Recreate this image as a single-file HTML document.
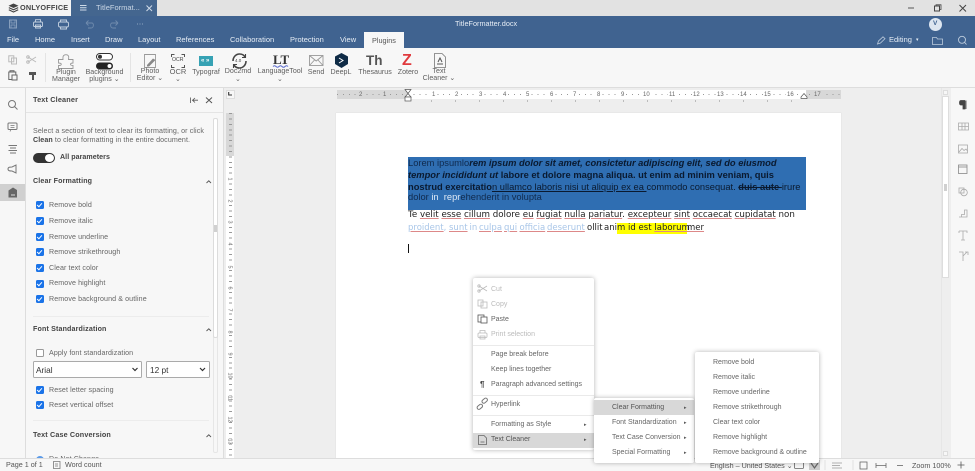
<!DOCTYPE html>
<html><head><meta charset="utf-8">
<style>
html,body{margin:0;padding:0}
body{width:975px;height:471px;overflow:hidden;position:relative;background:#eee;font-family:"Liberation Sans",sans-serif;font-size:7.5px;color:#444}
#w{position:absolute;left:0;top:0;width:975px;height:471px;overflow:hidden;filter:blur(.3px)}
.a,.t,svg{position:absolute}
.t{white-space:nowrap;line-height:10px}
.c{text-align:center;transform:translateX(-50%);line-height:7px;color:#606060;font-size:7.1px}
.w{color:#e6edf5;font-size:7.5px}
.p{color:#666;font-size:7.1px;letter-spacing:.1px}
.h{color:#444;font-weight:bold;font-size:7.2px;letter-spacing:.15px}
.cb{position:absolute;left:35.5px;width:8px;height:8px;background:#1a73e8;border-radius:1.5px}
.cb:after{content:"";position:absolute;left:2.6px;top:.6px;width:2px;height:4px;border:solid #fff;border-width:0 1.2px 1.2px 0;transform:rotate(42deg)}
.m{color:#666;font-size:7px}
.d{font-size:7px}
.menu{position:absolute;background:#fff;border-radius:2px;box-shadow:0 0 5px rgba(0,0,0,.3)}
.doc{font-family:"Liberation Sans",sans-serif;font-size:9.33px;color:#222}
.o{font-family:"DejaVu Sans",sans-serif;font-size:8.7px;color:#222}
.o2{font-family:"DejaVu Sans",sans-serif;font-size:8.5px;color:#222;top:223px}
.l{color:#a9c6e8}
.u{text-decoration:underline;text-decoration-color:#d88;text-underline-offset:1px}
.n{font-size:6px;color:#666;line-height:8px;padding:0 1px;top:90.5px;background:#fff}
.g{background:#d8d8d8}
.v{font-size:5.5px;color:#666;line-height:6px;left:227px;width:5px;text-align:center;background:#fff;transform:rotate(90deg)}
svg{overflow:visible}
</style></head><body><div id="w">

<!-- title bar -->
<div class="a" style="left:0;top:0;width:975px;height:16px;background:#e2e2e2"></div>
<div class="a" style="left:0;top:0;width:71px;height:16px;background:#f4f4f4"></div>
<div class="a" style="left:71px;top:0;width:86px;height:16px;background:#44668f"></div>
<svg style="left:8px;top:3px" width="11" height="10" viewBox="0 0 11 10"><path d="M5.5 0.5L10.5 2.8 5.5 5 .5 2.8Z" fill="#444"/><path d="M.8 4.6L5.5 6.8 10.2 4.6M.8 6.8L5.5 9 10.2 6.8" fill="none" stroke="#444" stroke-width="1.1"/></svg>
<div class="t" style="left:20px;top:3px;font-size:7.3px;font-weight:bold;color:#444;letter-spacing:.2px">ONLYOFFICE</div>
<svg style="left:80px;top:5px" width="7" height="6"><path d="M0 .5H6.5M0 2.8H6.5M0 5H6.5" stroke="#cfdbe8" stroke-width="1"/></svg>
<div class="t w" style="left:96px;top:3px;color:#c9d6e5">TitleFormat...</div>
<svg style="left:146px;top:5px" width="7" height="7"><path d="M.5 .5L6 6M6 .5L.5 6" stroke="#cfdbe8" stroke-width="1"/></svg>
<svg style="left:908px;top:4px" width="60" height="9"><path d="M0 4H6" stroke="#555" stroke-width="1"/><rect x="26.5" y="2" width="5" height="5" fill="none" stroke="#444" stroke-width="1"/><path d="M28 2V.8H33V5.5H31.8" fill="none" stroke="#444" stroke-width=".8"/><path d="M51.500 1L58 7.500M58 1L51.500 7.500" stroke="#444" stroke-width="1"/></svg>

<!-- header -->
<div class="a" style="left:0;top:16px;width:975px;height:32px;background:#406390"></div>
<svg style="left:9px;top:19px" width="140" height="11" fill="none" stroke="#8ea5c1" stroke-width=".9"><rect x=".5" y="1" width="7" height="8"/><path d="M2 1V4H6V1M2 9V6H6V9" stroke-width=".7"/><g stroke="#c5d2e1"><rect x="24.500" y="3" width="9" height="4.500" rx="1"/><path d="M26.500 3V.7H31.500V3M26.500 6H31.500V9H26.500Z"/><rect x="49.500" y="3" width="10" height="5" rx="1.500"/><path d="M51.500 3V1H57.500V3M51.500 8V10H57.500V8"/></g><g stroke="#6f8bad"><path d="M77 4H83C85 4 85 9 82 9H79M77 4L79.500 1.500M77 4L79.500 6.500"/><path d="M109 4H103C101 4 101 9 104 9H107M109 4L106.500 1.500M109 4L106.500 6.500"/></g><path d="M128 5H129M130.500 5H131.500M133 5H134" stroke="#8ea5c1"/></svg>
<div class="t w" style="left:455px;top:19px;font-size:7.3px">TitleFormatter.docx</div>
<div class="a" style="left:929px;top:18px;width:13px;height:13px;border-radius:50%;background:#dde6f0"></div>
<div class="t" style="left:933px;top:19px;font-weight:bold;color:#406390;font-size:6.5px">V</div>
<div class="t w" style="left:7px;top:35px">File</div>
<div class="t w" style="left:35px;top:35px">Home</div>
<div class="t w" style="left:71px;top:35px">Insert</div>
<div class="t w" style="left:105px;top:35px">Draw</div>
<div class="t w" style="left:138px;top:35px">Layout</div>
<div class="t w" style="left:176px;top:35px">References</div>
<div class="t w" style="left:230px;top:35px">Collaboration</div>
<div class="t w" style="left:290px;top:35px">Protection</div>
<div class="t w" style="left:340px;top:35px">View</div>
<div class="a" style="left:364px;top:32px;width:40px;height:16px;background:#f7f7f7"></div>
<div class="t" style="left:372px;top:36px;color:#555;font-size:7.3px">Plugins</div>
<svg style="left:877px;top:36px" width="90" height="10" fill="none" stroke="#bccbdc"><path d="M.5 8L1.500 5 6 .8 8 2.600 3.500 7Z" stroke-width=".8"/><path d="M55.500 1.500H59.500L60.500 3H65.500V8.500H55.500Z" stroke-width=".8"/><circle cx="85" cy="3.800" r="3.500" stroke-width=".9"/><path d="M87.500 6.300L89.500 8.500" stroke-width=".9"/></svg>
<div class="t w" style="left:889px;top:35px">Editing</div>
<div class="t w" style="left:916px;top:35px;font-size:5px">▾</div>

<!-- toolbar -->
<div class="a" style="left:0;top:48px;width:975px;height:39px;background:#f7f7f7;border-bottom:1px solid #ddd"></div>
<div class="a" style="left:45px;top:53px;width:1px;height:29px;background:#e4e4e4"></div>
<div class="a" style="left:130px;top:53px;width:1px;height:29px;background:#e4e4e4"></div>
<svg style="left:8px;top:55px" width="30" height="28" fill="none" stroke="#bbb" stroke-width="1"><rect x=".8" y=".8" width="5" height="6"/><rect x="3.500" y="3" width="5" height="6"/><path d="M20 2L28 7M20 7L28 2"/><circle cx="20" cy="2" r="1.300"/><circle cx="20" cy="7" r="1.300"/><g stroke="#666"><rect x=".8" y="17" width="7" height="7.500"/><rect x="4" y="20" width="5" height="5" fill="#f7f7f7"/><path d="M2 17V15.700H6V17"/></g><path d="M21 17H28V20H26V25H24V20H21Z" fill="#555" stroke="none"/></svg>
<svg style="left:58px;top:54px" width="16" height="15" fill="none" stroke="#999" stroke-width=".9"><path d="M.5 5.500H5C5 4 4.500 3 5.500 1.700 6.700 .3 9.300 .3 10.300 1.700 11.300 3 10.500 4 10.500 5.500H15V9C13.500 9 12.500 9.300 12.500 10.300S13.500 11.500 15 11.500V14.500H.5V11.500C2 11.500 3.300 11.300 3.300 10.300S2 9 .5 9Z"/></svg>
<div class="t c" style="left:66px;top:69px">Plugin<br>Manager</div>
<svg style="left:96px;top:53px" width="18" height="17"><rect x=".5" y=".5" width="16" height="6.500" rx="3.250" fill="#fff" stroke="#333"/><circle cx="4" cy="3.700" r="2" fill="#333"/><rect x="0" y="9.500" width="17" height="7" rx="3.500" fill="#222"/><circle cx="13.500" cy="13" r="2" fill="#fff"/></svg>
<div class="t c" style="left:104.500px;top:69px">Background<br>plugins ⌄</div>
<svg style="left:144px;top:54px" width="14" height="14" fill="none" stroke="#999"><path d="M.5 .5H11.500V13.500H.5Z" stroke-width=".9"/><path d="M3 11L9 4.500 11.500 6 5 12.500H3Z" fill="#888" stroke="none"/></svg>
<div class="t c" style="left:150px;top:68px">Photo<br>Editor ⌄</div>
<svg style="left:171px;top:54px" width="14" height="14" fill="none" stroke="#555"><path d="M.5 3V.5H3.500M10.500 .5H13.500V3M.5 11V13.500H3.500M10.500 13.500H13.500V11"/></svg>
<div class="t" style="left:172px;top:57px;font-size:5.200px;color:#444;line-height:7px">OCR</div>
<div class="t c" style="left:178px;top:68px;font-size:7.500px">OCR</div>
<div class="t" style="left:175px;top:75px;font-size:7px;color:#666">⌄</div>
<div class="a" style="left:199px;top:56px;width:14px;height:10px;background:#36a2b4"></div>
<div class="t" style="left:201px;top:56px;font-size:6px;color:#fff;font-weight:bold">«  »</div>
<div class="t c" style="left:206px;top:69px">Typograf</div>
<svg style="left:231px;top:53px" width="17" height="16" fill="none" stroke="#444" stroke-width="1.600"><path d="M2 8C2 4 5 1 8.500 1 11 1 13 2 14 4M15 8C15 12 12 15 8.500 15 6 15 4 14 3 12"/><path d="M14.500 1V4.500H11M2.500 15V11.500H6" stroke-width="1.100"/></svg>
<div class="t" style="left:235px;top:56px;font-size:4.500px;color:#444">4.0</div>
<div class="t c" style="left:238px;top:68px">Doc2md</div>
<div class="t" style="left:235px;top:75px;font-size:7px;color:#666">⌄</div>
<div class="t" style="left:273px;top:53px;font-family:'Liberation Serif',serif;font-size:13px;font-weight:bold;color:#333;line-height:13px">LT</div>
<svg style="left:273px;top:65px" width="15" height="3"><path d="M0 1.500Q1.500 0 3 1.500T6 1.500 9 1.500 12 1.500 15 1.500" fill="none" stroke="#5566cc"/></svg>
<div class="t c" style="left:280px;top:68px">LanguageTool</div>
<div class="t" style="left:277px;top:75px;font-size:7px;color:#666">⌄</div>
<svg style="left:309px;top:55px" width="15" height="11" fill="none" stroke="#999" stroke-width=".9"><rect x=".5" y=".5" width="13.500" height="10"/><path d="M.5 .5L7.200 6 14 .5M.5 10.500L5.500 5M14 10.500L9 5"/></svg>
<div class="t c" style="left:316px;top:69px">Send</div>
<svg style="left:335px;top:53px" width="13" height="15"><path d="M6.500 0L13 3.500V11L6.500 15 0 11V3.500Z" fill="#0f2b46"/><path d="M4 5L8 7.500 4 10" fill="none" stroke="#fff" stroke-width="1"/></svg>
<div class="t c" style="left:341px;top:69px">DeepL</div>
<div class="t" style="left:366px;top:53px;font-size:13.500px;font-weight:bold;color:#555;line-height:15px">Th</div>
<div class="t c" style="left:375px;top:69px">Thesaurus</div>
<div class="t" style="left:402px;top:52px;font-size:16px;font-weight:bold;color:#e03a3e;line-height:17px">Z</div>
<div class="t c" style="left:408px;top:69px">Zotero</div>
<svg style="left:434px;top:53px" width="12" height="15" fill="none" stroke="#777" stroke-width=".8"><path d="M.5 .5H8L11.500 4V14.500H.5Z"/><path d="M3 11H9M4 9L6 5 8 9" stroke="#555" stroke-width="1"/></svg>
<div class="t c" style="left:439px;top:67.500px">Text<br>Cleaner ⌄</div>

<!-- left bar -->
<div class="a" style="left:0;top:88px;width:25px;height:370px;background:#f7f7f7;border-right:1px solid #ddd"></div>
<svg style="left:7px;top:99px" width="13" height="100" fill="none" stroke="#777" stroke-width="1"><circle cx="5" cy="5" r="3.500"/><path d="M7.500 7.500L10.500 10.500"/><rect x="1" y="24" width="9" height="6.500" rx="1"/><path d="M3 32.500L4 30.500H6M3.500 26.500H7.500M3.500 28.500H7.500" stroke-width=".7"/><path d="M1.500 46.500H10M3 49H9M1.500 51.500H10M3 54H9"/><path d="M1 70C1 68 3 68 5 68L9 66V74L5 72C3 72 1 72 1 70Z"/></svg>
<div class="a" style="left:0;top:184px;width:25px;height:17px;background:#d0d0d0"></div>
<svg style="left:8px;top:187px" width="10" height="11"><path d="M5 0.500L9 3V10.500H.5V3.500Z" fill="#666"/><path d="M3 8H7" stroke="#ddd"/></svg>

<!-- panel -->
<div class="a" style="left:26px;top:88px;width:197px;height:370px;background:#f7f7f7;border-right:1px solid #ddd"></div>
<div class="a" style="left:26px;top:112px;width:197px;height:1px;background:#e4e4e4"></div>
<div class="t h" style="left:33px;top:95px;font-size:7.300px">Text Cleaner</div>
<svg style="left:190px;top:97px" width="27" height="7" fill="none" stroke="#555" stroke-width=".8"><path d="M.5 .5V6M8 3.200H2.500M5 1L2.500 3.200 5 5.500"/><path d="M16 .5L22 6M22 .5L16 6" stroke-width="1"/></svg>
<div class="a" style="left:213px;top:118px;width:5px;height:335px;border:1px solid #e6e6e6;border-radius:2px;box-sizing:border-box"></div>
<div class="a" style="left:213px;top:118px;width:5px;height:220px;background:#fff;border:1px solid #dcdcdc;border-radius:2px;box-sizing:border-box"></div>
<div class="a" style="left:214px;top:225px;width:3px;height:7px;background:#d0d0d0"></div>
<div class="t p" style="left:33px;top:126px">Select a section of text to clear its formatting, or click</div>
<div class="t p" style="left:33px;top:135px"><b style="color:#444">Clean</b> to clear formatting in the entire document.</div>
<div class="a" style="left:33px;top:153px;width:22px;height:10px;border-radius:5px;background:#333"></div>
<div class="a" style="left:45px;top:154px;width:9px;height:8px;border-radius:50%;background:#fff"></div>
<div class="t h" style="left:60px;top:152px;font-size:7.100px;letter-spacing:.05px">All parameters</div>
<div class="t h" style="left:33px;top:176px;font-size:7.100px">Clear Formatting</div>
<svg style="left:205.500px;top:179.500px" width="6" height="4"><path d="M.5 3L2.800 .8 5 3" fill="none" stroke="#555" stroke-width=".9"/></svg>
<div class="cb" style="top:201px"></div><div class="t p" style="left:49px;top:200px">Remove bold</div>
<div class="cb" style="top:217px"></div><div class="t p" style="left:49px;top:216px">Remove italic</div>
<div class="cb" style="top:233px"></div><div class="t p" style="left:49px;top:232px">Remove underline</div>
<div class="cb" style="top:248px"></div><div class="t p" style="left:49px;top:247px">Remove strikethrough</div>
<div class="cb" style="top:264px"></div><div class="t p" style="left:49px;top:263px">Clear text color</div>
<div class="cb" style="top:280px"></div><div class="t p" style="left:49px;top:278px">Remove highlight</div>
<div class="cb" style="top:295px"></div><div class="t p" style="left:49px;top:294px">Remove background &amp; outline</div>
<div class="a" style="left:33px;top:316px;width:176px;height:1px;background:#ececec"></div>
<div class="t h" style="left:33px;top:324px;font-size:7.100px">Font Standardization</div>
<svg style="left:205.500px;top:327.500px" width="6" height="4"><path d="M.5 3L2.800 .8 5 3" fill="none" stroke="#555" stroke-width=".9"/></svg>
<div class="a" style="left:35.500px;top:349px;width:8px;height:8px;border:1px solid #999;border-radius:1.500px;background:#fff;box-sizing:border-box"></div>
<div class="t p" style="left:49px;top:348px">Apply font standardization</div>
<div class="a" style="left:33px;top:361px;width:109px;height:17px;background:#fff;border:1px solid #aaa;border-radius:1.500px;box-sizing:border-box"></div>
<div class="t" style="left:36px;top:365px;font-size:8.300px;color:#333">Arial</div>
<div class="a" style="left:146px;top:361px;width:64px;height:17px;background:#fff;border:1px solid #aaa;border-radius:1.500px;box-sizing:border-box"></div>
<div class="t" style="left:150px;top:365px;font-size:8.300px;color:#333">12 pt</div>
<svg style="left:132px;top:367px" width="75" height="6" fill="none" stroke="#333" stroke-width="1.200"><path d="M.5 1L3 3.500 5.500 1M68 1L70.500 3.500 73 1"/></svg>
<div class="cb" style="top:386px"></div><div class="t p" style="left:49px;top:385px">Reset letter spacing</div>
<div class="cb" style="top:401px"></div><div class="t p" style="left:49px;top:400px">Reset vertical offset</div>
<div class="a" style="left:33px;top:420px;width:176px;height:1px;background:#ececec"></div>
<div class="t h" style="left:33px;top:430px">Text Case Conversion</div>
<svg style="left:205.500px;top:433.500px" width="6" height="4"><path d="M.5 3L2.800 .8 5 3" fill="none" stroke="#555" stroke-width=".9"/></svg>
<div class="a" style="left:36px;top:456px;width:8px;height:8px;border-radius:50%;background:#5b9ae8"></div>
<div class="t p" style="left:49px;top:454px">Do Not Change</div>

<!-- rulers -->
<div class="a" style="left:224px;top:88px;width:717px;height:370px;background:#eee"></div>
<div class="a" style="left:226px;top:90px;width:9px;height:9px;background:#f7f7f7;border:1px solid #ddd;box-sizing:border-box"></div>
<svg style="left:228px;top:92px" width="4" height="4"><path d="M.7 0V3H4" fill="none" stroke="#333" stroke-width="1.100"/></svg>
<div class="a" style="left:226px;top:113px;width:8px;height:345px;background:#fff"></div>
<div class="a" style="left:226px;top:113px;width:8px;height:43px;background:#d8d8d8"></div>
<div class="a" style="left:337px;top:90px;width:71px;height:9px;background:#d8d8d8"></div>
<div class="a" style="left:408px;top:90px;width:398px;height:9px;background:#fff"></div>
<div class="a" style="left:806px;top:90px;width:35px;height:9px;background:#d8d8d8"></div>
<div class="a" style="left:337px;top:94px;width:504px;height:1px;background:repeating-linear-gradient(90deg,#999 0 1px,transparent 1px 5.900px)"></div>
<div class="a" style="left:408px;top:100px;width:398px;height:2px;background:repeating-linear-gradient(90deg,transparent 0 23px,#bbb 23px 24px,transparent 24px 23.600px)"></div>
<div class="a" style="left:228.500px;top:113px;width:3px;height:345px;background:repeating-linear-gradient(180deg,#999 0 1px,transparent 1px 5.420px)"></div>
<span class="a n g" style="left:358px">2</span><span class="a n g" style="left:382px">1</span><span class="a n" style="left:431px">1</span><span class="a n" style="left:454px">2</span><span class="a n" style="left:478px">3</span><span class="a n" style="left:502px">4</span><span class="a n" style="left:525px">5</span><span class="a n" style="left:549px">6</span><span class="a n" style="left:572px">7</span><span class="a n" style="left:596px">8</span><span class="a n" style="left:620px">9</span><span class="a n" style="left:642px">10</span><span class="a n" style="left:668px">11</span><span class="a n" style="left:692px">12</span><span class="a n" style="left:716px">13</span><span class="a n" style="left:739px">14</span><span class="a n" style="left:763px">15</span><span class="a n" style="left:786px">16</span><span class="a n g" style="left:813px">17</span>
<span class="a v" style="top:176px">1</span><span class="a v" style="top:198px">2</span><span class="a v" style="top:219px">3</span><span class="a v" style="top:241px">4</span><span class="a v" style="top:264px">5</span><span class="a v" style="top:285px">6</span><span class="a v" style="top:307px">7</span><span class="a v" style="top:329px">8</span><span class="a v" style="top:351px">9</span><span class="a v" style="top:372px">10</span><span class="a v" style="top:395px">11</span><span class="a v" style="top:416px">12</span><span class="a v" style="top:438px">13</span>
<svg style="left:404px;top:89px" width="10" height="13" fill="#fff" stroke="#555" stroke-width=".7"><path d="M1 .5H7L4 4.500Z"/><path d="M4 4.500L7 8H1Z"/><rect x="1" y="8" width="6" height="4"/></svg>
<svg style="left:800px;top:93px" width="8" height="6" fill="#fff" stroke="#555" stroke-width=".7"><path d="M4 .5L7 4V5.500H1V4Z"/></svg>

<!-- page -->
<div class="a" style="left:336px;top:113px;width:505px;height:345px;background:#fff;box-shadow:0 0 1px #ccc"></div>
<div class="a" style="left:408px;top:157px;width:398px;height:53px;background:#2f6eb2"></div>
<div class="t doc" style="left:408px;top:158px;color:#102a4d">Lorem ipsumlo<b style="color:#0a1a30"><i>rem ipsum dolor sit amet, consictetur adipiscing elit, sed do eiusmod</i></b></div>
<div class="t doc" style="left:408px;top:170px;color:#0a1a30;font-weight:bold"><i>tempor incididunt ut</i> labore et dolore magna aliqua. ut enim ad minim veniam, quis</div>
<div class="t doc" style="left:408px;top:182px;color:#0a1a30"><b>nostrud exercitatio</b><u>n ullamco laboris nisi ut aliquip ex ea </u>commodo consequat. <b><s>duis aute </s></b>irure</div>
<div class="t doc" style="left:408px;top:191.500px;color:#102a4d">dolor <span style="color:#dde8f5">in&nbsp; repr</span>ehenderit in volupta</div>
<div class="t o" style="left:408px;top:210px"><span>Te </span><span class="u">velit</span> <span class="u">esse</span> <span class="u">cillum</span> dolore <span class="u">eu</span> <span class="u">fugiat</span> <span class="u">nulla</span> <span class="u">pariatur</span>. <span class="u">excepteur</span> <span class="u">sint</span> <span class="u">occaecat</span> <span class="u">cupidatat</span> non</div>
<div class="t o2 l" style="left:408px"><span class="u">proident</span>,</div>
<div class="t o2 l" style="left:449px"><span class="u">sunt</span></div>
<div class="t o2 l" style="left:469.500px">in</div>
<div class="t o2 l" style="left:479px"><span class="u">culpa</span></div>
<div class="t o2 l" style="left:504px"><span class="u">qui</span></div>
<div class="t o2 l" style="left:519.500px"><span class="u">officia</span></div>
<div class="t o2 l" style="left:547px"><span class="u">deserunt</span></div>
<div class="t o2" style="left:587px">ollit</div>
<div class="t o2" style="left:604px">ani</div>
<div class="a" style="left:617px;top:223px;width:70px;height:11px;background:#ff0"></div>
<div class="t o2" style="left:617px;letter-spacing:.02px">m id est <span class="u">laborum</span></div>
<div class="t o2" style="left:687px"><span class="u">mer</span></div>
<div class="a" style="left:408px;top:244px;width:1px;height:9px;background:#111"></div>

<!-- scrollbar and right panel -->
<div class="a" style="left:941px;top:88px;width:10px;height:370px;background:#eee;border-left:1px solid #e6e6e6;box-sizing:border-box"></div>
<div class="a" style="left:942px;top:96px;width:7px;height:182px;background:#fff;border:1px solid #ddd;box-sizing:border-box"></div>
<div class="a" style="left:943px;top:90px;width:5px;height:5px;background:#f7f7f7;border:1px solid #ddd;box-sizing:border-box"></div>
<div class="a" style="left:943px;top:451px;width:5px;height:5px;background:#f7f7f7;border:1px solid #ddd;box-sizing:border-box"></div>
<div class="a" style="left:944px;top:184px;width:3px;height:7px;background:#d0d0d0"></div>
<div class="a" style="left:951px;top:88px;width:24px;height:370px;background:#f7f7f7"></div>
<svg style="left:958px;top:100px" width="12" height="165" fill="none" stroke="#aaa" stroke-width=".8"><path d="M7 .5H3C1 .5 1 5 3 5H5V9H7V.5M8 .5V9" fill="#444" stroke="#444"/><path d="M.5 23H10.500V30H.5ZM.5 26.500H10.500M4 23V30M7 23V30"/><rect x=".5" y="45" width="9" height="8"/><path d="M1 52L4 48.500 6 50.500 8 49 9.500 51"/><rect x=".5" y="65" width="8.500" height="8.500" stroke="#888"/><path d="M.5 67H9" stroke="#888"/><rect x="1" y="88" width="5" height="5"/><circle cx="6" cy="92.500" r="3.300"/><path d="M1 117H3.500V114.500H6.500V110H9V117H1Z"/><path d="M1 131H9V133M1 131V133M5 131V140M3 140H7"/><path d="M1 152H5V161M5 156L9 152M7 152H10V155"/></svg>

<!-- status bar -->
<div class="a" style="left:0;top:458px;width:975px;height:13px;background:#f7f7f7;border-top:1px solid #ddd;box-sizing:border-box"></div>
<div class="t" style="left:6px;top:460px;font-size:7.200px;color:#555">Page 1 of 1</div>
<svg style="left:53px;top:461px" width="8" height="8" fill="none" stroke="#777"><path d="M.5 .5H7V7.500H.5ZM2 3H5M2 5H5" stroke-width=".8"/></svg>
<div class="t" style="left:65px;top:460px;font-size:7.200px;color:#555">Word count</div>
<div class="t" style="left:710px;top:460.500px;font-size:7.200px;color:#555">English – United States ⌄</div>
<svg style="left:794px;top:462px" width="135" height="8" fill="none" stroke="#666" stroke-width=".8"><rect x=".5" y=".5" width="9" height="6" rx="1"/><rect x="15" y="-2" width="11" height="10" fill="#ccc" stroke="none"/><path d="M17 1L20.500 6 24 1" stroke-width="1.200"/><path d="M31 -2V8M59 -2V8" stroke="#ddd"/><path d="M38 1H48M38 3.500H46M38 6H48" stroke="#999"/><rect x="66" y="0" width="7" height="7"/><path d="M82 3.500H92M82 1V6M92 1V6"/><path d="M103 3.500H109"/></svg>
<div class="t" style="left:912px;top:460.500px;font-size:7.200px;color:#555">Zoom 100%</div>
<svg style="left:957px;top:461px" width="9" height="9"><path d="M4 .5V7.500M.5 4H7.500" stroke="#555" stroke-width=".8"/></svg>

<!-- context menus -->
<div class="menu" style="left:473px;top:278px;width:121px;height:172px"></div>
<svg style="left:477px;top:284px" width="12" height="60" fill="none" stroke="#bbb" stroke-width=".8"><path d="M2 2L10 7M2 7L10 2"/><circle cx="2" cy="2" r="1.200"/><circle cx="2" cy="7" r="1.200"/><rect x="1" y="16" width="5" height="6"/><rect x="4" y="18" width="6" height="6"/><g stroke="#555"><rect x="1" y="31" width="6" height="7"/><rect x="4" y="33" width="6" height="6" fill="#fff"/></g><rect x="1" y="49" width="9" height="4.500" rx="1"/><path d="M3 49V46.500H8V49M3 52H8V55H3Z"/></svg>
<div class="t d" style="left:491px;top:285px;color:#bbb">Cut</div>
<div class="t d" style="left:491px;top:300px;color:#bbb">Copy</div>
<div class="t m" style="left:491px;top:315px">Paste</div>
<div class="t d" style="left:491px;top:330px;color:#bbb">Print selection</div>
<div class="a" style="left:473px;top:344.500px;width:121px;height:1px;background:#eaeaea"></div>
<div class="t m" style="left:491px;top:350px">Page break before</div>
<div class="t m" style="left:491px;top:365px">Keep lines together</div>
<div class="t" style="left:480px;top:380px;font-size:8px;color:#444;font-weight:bold">¶</div>
<div class="t m" style="left:491px;top:380px">Paragraph advanced settings</div>
<div class="a" style="left:473px;top:394.500px;width:121px;height:1px;background:#eaeaea"></div>
<svg style="left:477px;top:399px" width="11" height="11" fill="none" stroke="#777" stroke-width="1"><rect x="5" y="-.2" width="6" height="3.500" rx="1.700" transform="rotate(-40 8 2)"/><rect x="0" y="6" width="6" height="3.500" rx="1.700" transform="rotate(-40 3 8)"/></svg>
<div class="t m" style="left:491px;top:400px">Hyperlink</div>
<div class="a" style="left:473px;top:414.500px;width:121px;height:1px;background:#eaeaea"></div>
<div class="t m" style="left:491px;top:420px">Formatting as Style</div>
<div class="t" style="left:584px;top:420px;font-size:5px;color:#555">▸</div>
<div class="a" style="left:473px;top:432.500px;width:121px;height:15px;background:#d8d8d8"></div>
<svg style="left:478px;top:435px" width="9" height="10" fill="none" stroke="#666" stroke-width=".8"><path d="M.5 .5H6L8.500 3V9.500H.5Z"/><path d="M2.500 7H6.500"/></svg>
<div class="t m" style="left:491px;top:435px;color:#555">Text Cleaner</div>
<div class="t" style="left:584px;top:435px;font-size:5px;color:#555">▸</div>

<div class="menu" style="left:594px;top:398px;width:100px;height:65px"></div>
<div class="a" style="left:594px;top:400px;width:100px;height:14.500px;background:#d8d8d8"></div>
<div class="t m" style="left:612px;top:402.500px;color:#555">Clear Formatting</div>
<div class="t" style="left:684px;top:402.500px;font-size:5px;color:#555">▸</div>
<div class="t m" style="left:612px;top:417.500px">Font Standardization</div>
<div class="t" style="left:684px;top:417.500px;font-size:5px;color:#555">▸</div>
<div class="t m" style="left:612px;top:432.500px">Text Case Conversion</div>
<div class="t" style="left:684px;top:432.500px;font-size:5px;color:#555">▸</div>
<div class="t m" style="left:612px;top:448px">Special Formatting</div>
<div class="t" style="left:684px;top:448px;font-size:5px;color:#555">▸</div>

<div class="menu" style="left:695px;top:352px;width:124px;height:111px"></div>
<div class="t m" style="left:713px;top:358px">Remove bold</div>
<div class="t m" style="left:713px;top:373px">Remove italic</div>
<div class="t m" style="left:713px;top:388px">Remove underline</div>
<div class="t m" style="left:713px;top:403px">Remove strikethrough</div>
<div class="t m" style="left:713px;top:418px">Clear text color</div>
<div class="t m" style="left:713px;top:433px">Remove highlight</div>
<div class="t m" style="left:713px;top:448px">Remove background &amp; outline</div>
</div></body></html>
